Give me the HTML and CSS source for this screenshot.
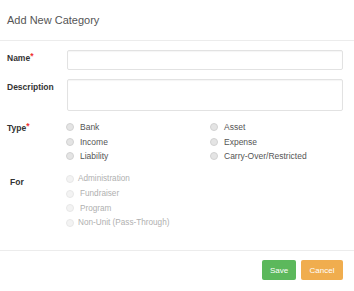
FILE: index.html
```html
<!DOCTYPE html>
<html>
  <head>
    <meta charset="UTF-8">
    <title>Add New Category</title>
    <link rel="stylesheet" href="styles.css">
  </head>
  <body>
    <div class="modal">
      <div class="modal-header">
        <p class="title">Add New Category</p>
      </div>
      <div class="modal-body">
        <div class="row">
          <label class="label">Name<span class="req">*</span></label>
          <input class="field" type="text">
        </div>
        <div class="row">
          <label class="label">Description</label>
          <textarea class="field area"></textarea>
        </div>
        <div class="row">
          <label class="label">Type<span class="req">*</span></label>
          <div class="options">
            <div class="opt"><span class="dot"></span>Bank</div>
            <div class="opt"><span class="dot"></span>Asset</div>
            <div class="opt"><span class="dot"></span>Income</div>
            <div class="opt"><span class="dot"></span>Expense</div>
            <div class="opt"><span class="dot"></span>Liability</div>
            <div class="opt"><span class="dot"></span>Carry-Over/Restricted</div>
          </div>
        </div>
        <div class="row">
          <label class="label for">For</label>
          <div class="list">
            <div class="opt off"><span class="dot"></span>Administration</div>
            <div class="opt off pad"><span class="dot"></span>Fundraiser</div>
            <div class="opt off pad"><span class="dot"></span>Program</div>
            <div class="opt off"><span class="dot"></span>Non-Unit (Pass-Through)</div>
          </div>
        </div>
      </div>
      <div class="modal-footer">
        <button class="btn save">Save</button>
        <button class="btn cancel">Cancel</button>
      </div>
    </div>
  </body>
</html>
```

FILE: styles.css
```css
body {
  margin: 0;
  background-color: #fff;
  font-family: 'Liberation Sans', Arial, sans-serif;
  color: #333;
}
.modal {
  width: 354px;
  height: 291px;
  display: flex;
  flex-direction: column;
}
.modal-header {
  height: 40px;
  border-bottom: 1px solid #ececec;
  display: flex;
  align-items: center;
  padding-left: 7px;
}
p.title {
  margin: 0;
  font-size: 11px;
  color: #555;
}
.modal-body {
  padding: 9px 11px 0 7px;
  height: 200px;
}
.row {
  display: flex;
  margin-bottom: 9px;
}
.label {
  width: 60px;
  flex: none;
  font-size: 8.5px;
  font-weight: bold;
  line-height: 10px;
  padding-top: 3px;
  color: #333;
}
.label.for {
  padding-left: 3px;
  width: 57px;
  padding-top: 4px;
}
.req {
  color: #e33;
  vertical-align: top;
  position: relative;
  top: -2px;
}
.field {
  flex: 1;
  margin: 0;
  height: 20px;
  box-sizing: border-box;
  border: 1px solid #e2e2e2;
  border-radius: 2px;
  box-shadow: inset 0 1px 1px rgba(0,0,0,0.04);
  font-family: inherit;
  outline: none;
}
.field.area {
  height: 32px;
  resize: none;
}
.options {
  display: grid;
  grid-template-columns: 144px auto;
}
.list {
  margin-top: -1px;
}
.opt {
  display: flex;
  align-items: center;
  height: 14.5px;
  font-size: 8.5px;
  color: #555;
}
.list .opt {
  height: 14.7px;
  font-size: 8.2px;
}
.dot {
  width: 6px;
  height: 6px;
  border-radius: 50%;
  background-color: #e4e4e4;
  border: 1px solid #d2d2d2;
  margin: 0 6px 0 -1px;
}
.opt.off {
  color: #b0b0b0;
}
.opt.off .dot {
  background-color: #f3f3f3;
  border-color: #e8e8e8;
  margin-right: 4px;
}
.opt.off.pad .dot {
  margin-right: 6px;
}
.modal-footer {
  border-top: 1px solid #ececec;
  display: flex;
  justify-content: flex-end;
  gap: 5px;
  padding: 9px 11px 0 0;
  flex: 1;
}
.btn {
  height: 20px;
  border: none;
  border-radius: 2px;
  color: #fff;
  font-family: inherit;
  font-size: 8px;
  padding: 0;
}
.btn.save {
  width: 34px;
  background-color: #5cb85c;
}
.btn.cancel {
  width: 42px;
  background-color: #f0ad4e;
}
```
